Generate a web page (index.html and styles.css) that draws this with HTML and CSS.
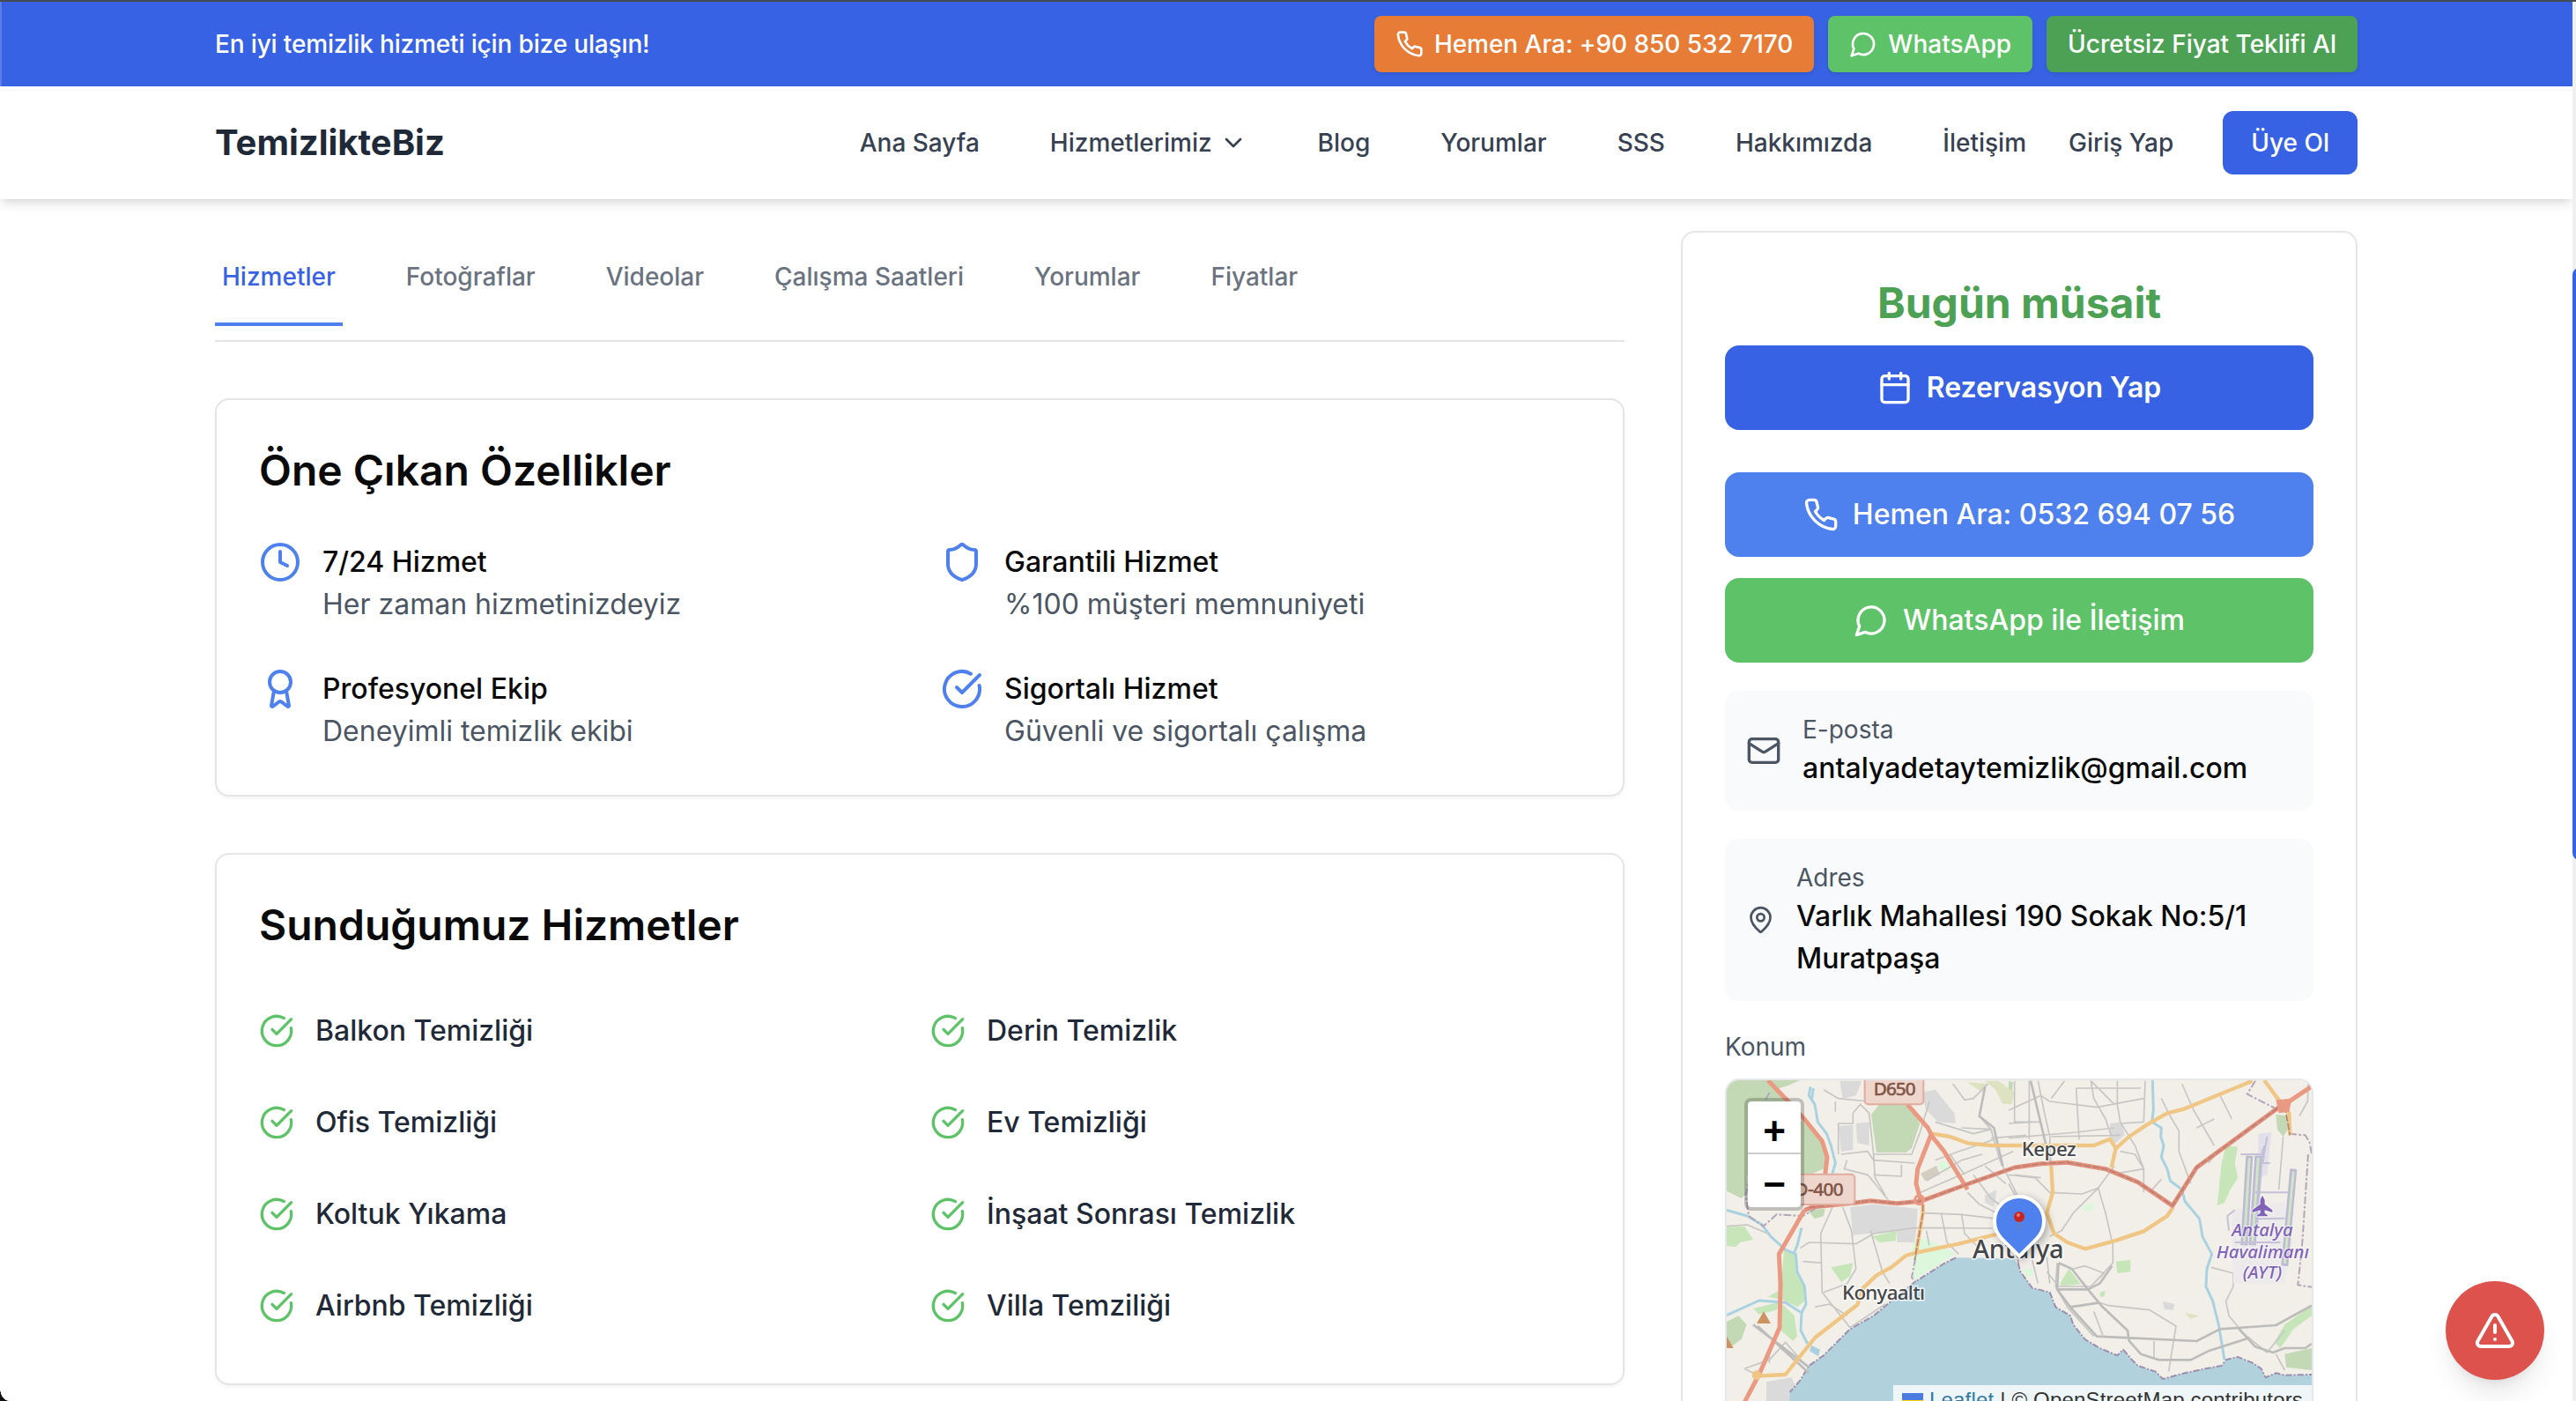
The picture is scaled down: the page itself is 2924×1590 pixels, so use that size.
FILE: index.html
```html
<!DOCTYPE html>
<html lang="tr">
<head>
    <meta charset="UTF-8">
    <meta name="viewport" content="width=device-width, initial-scale=1.0">
    <title>TemizlikteBiz</title>
    <link rel="stylesheet" href="styles.css">
</head>
<body>
    <!-- İkonlar -->
    <svg class="sprite" aria-hidden="true">
        <symbol id="phone" viewBox="0 0 24 24"><path d="M22 16.92v3a2 2 0 0 1-2.18 2 19.79 19.79 0 0 1-8.63-3.07 19.5 19.5 0 0 1-6-6 19.79 19.79 0 0 1-3.07-8.67A2 2 0 0 1 4.11 2h3a2 2 0 0 1 2 1.72 12.84 12.84 0 0 0 .7 2.81 2 2 0 0 1-.45 2.11L8.09 9.91a16 16 0 0 0 6 6l1.27-1.27a2 2 0 0 1 2.11-.45 12.84 12.84 0 0 0 2.81.7A2 2 0 0 1 22 16.92z"/></symbol>
        <symbol id="message" viewBox="0 0 24 24"><path d="M7.9 20A9 9 0 1 0 4 16.1L2 22Z"/></symbol>
        <symbol id="chevron" viewBox="0 0 24 24"><path d="m6 9 6 6 6-6"/></symbol>
        <symbol id="clock" viewBox="0 0 24 24"><circle cx="12" cy="12" r="10"/><path d="M12 6v6l4 2"/></symbol>
        <symbol id="shield" viewBox="0 0 24 24"><path d="M20 13c0 5-3.5 7.5-7.66 8.95a1 1 0 0 1-.67-.01C7.5 20.5 4 18 4 13V6a1 1 0 0 1 1-1c2 0 4.5-1.2 6.24-2.72a1.17 1.17 0 0 1 1.52 0C14.51 3.81 17 5 19 5a1 1 0 0 1 1 1z"/></symbol>
        <symbol id="award" viewBox="0 0 24 24"><path d="m15.477 12.89 1.515 8.526a.5.5 0 0 1-.81.47l-3.58-2.687a1 1 0 0 0-1.197 0l-3.586 2.686a.5.5 0 0 1-.81-.469l1.514-8.526"/><circle cx="12" cy="8" r="6"/></symbol>
        <symbol id="check" viewBox="0 0 24 24"><path d="M21.801 10A10 10 0 1 1 17 3.335"/><path d="m9 11 3 3L22 4"/></symbol>
        <symbol id="calendar" viewBox="0 0 24 24"><path d="M8 2v4M16 2v4M3 10h18"/><rect width="18" height="18" x="3" y="4" rx="2"/></symbol>
        <symbol id="mail" viewBox="0 0 24 24"><rect width="20" height="16" x="2" y="4" rx="2"/><path d="m22 7-8.97 5.7a1.94 1.94 0 0 1-2.06 0L2 7"/></symbol>
        <symbol id="pin" viewBox="0 0 24 24"><path d="M20 10c0 4.993-5.539 10.193-7.399 11.799a1 1 0 0 1-1.202 0C9.539 20.193 4 14.993 4 10a8 8 0 0 1 16 0"/><circle cx="12" cy="10" r="3"/></symbol>
        <symbol id="alert" viewBox="0 0 24 24"><path d="m21.73 18-8-14a2 2 0 0 0-3.48 0l-8 14A2 2 0 0 0 4 21h16a2 2 0 0 0 1.73-3"/><path d="M12 9v4M12 17h.01"/></symbol>
    </svg>

    <div class="topbar">
        <div class="container topbar-inner">
            <span class="topbar-text">En iyi temizlik hizmeti için bize ulaşın!</span>
            <div class="topbar-actions">
                <a class="top-btn orange"><svg class="icon"><use href="#phone"/></svg>Hemen Ara: +90 850 532 7170</a>
                <a class="top-btn green"><svg class="icon"><use href="#message"/></svg>WhatsApp</a>
                <a class="top-btn dark-green">Ücretsiz Fiyat Teklifi Al</a>
            </div>
        </div>
    </div>

    <header class="header">
        <div class="container header-inner">
            <a class="logo">TemizlikteBiz</a>
            <nav class="nav">
                <a>Ana Sayfa</a>
                <a class="has-menu">Hizmetlerimiz<svg class="icon"><use href="#chevron"/></svg></a>
                <a>Blog</a>
                <a>Yorumlar</a>
                <a>SSS</a>
                <a>Hakkımızda</a>
                <a>İletişim</a>
            </nav>
            <a class="login">Giriş Yap</a>
            <a class="signup">Üye Ol</a>
        </div>
    </header>

    <div class="container page">
        <main class="main">
            <div class="tabs">
                <a class="tab active">Hizmetler</a>
                <a class="tab">Fotoğraflar</a>
                <a class="tab">Videolar</a>
                <a class="tab">Çalışma Saatleri</a>
                <a class="tab">Yorumlar</a>
                <a class="tab">Fiyatlar</a>
            </div>

            <section class="card">
                <h2>Öne Çıkan Özellikler</h2>
                <div class="features">
                    <div class="feature">
                        <svg class="icon"><use href="#clock"/></svg>
                        <div><h3>7/24 Hizmet</h3><p>Her zaman hizmetinizdeyiz</p></div>
                    </div>
                    <div class="feature">
                        <svg class="icon"><use href="#shield"/></svg>
                        <div><h3>Garantili Hizmet</h3><p>%100 müşteri memnuniyeti</p></div>
                    </div>
                    <div class="feature">
                        <svg class="icon"><use href="#award"/></svg>
                        <div><h3>Profesyonel Ekip</h3><p>Deneyimli temizlik ekibi</p></div>
                    </div>
                    <div class="feature">
                        <svg class="icon"><use href="#check"/></svg>
                        <div><h3>Sigortalı Hizmet</h3><p>Güvenli ve sigortalı çalışma</p></div>
                    </div>
                </div>
            </section>

            <section class="card">
                <h2>Sunduğumuz Hizmetler</h2>
                <div class="services">
                    <div class="service"><svg class="icon"><use href="#check"/></svg>Balkon Temizliği</div>
                    <div class="service"><svg class="icon"><use href="#check"/></svg>Derin Temizlik</div>
                    <div class="service"><svg class="icon"><use href="#check"/></svg>Ofis Temizliği</div>
                    <div class="service"><svg class="icon"><use href="#check"/></svg>Ev Temizliği</div>
                    <div class="service"><svg class="icon"><use href="#check"/></svg>Koltuk Yıkama</div>
                    <div class="service"><svg class="icon"><use href="#check"/></svg>İnşaat Sonrası Temizlik</div>
                    <div class="service"><svg class="icon"><use href="#check"/></svg>Airbnb Temizliği</div>
                    <div class="service"><svg class="icon"><use href="#check"/></svg>Villa Temziliği</div>
                </div>
            </section>
        </main>

        <aside class="sidebar">
            <p class="available">Bugün müsait</p>
            <a class="btn btn-book"><svg class="icon"><use href="#calendar"/></svg>Rezervasyon Yap</a>
            <a class="btn btn-call"><svg class="icon"><use href="#phone"/></svg>Hemen Ara: 0532 694 07 56</a>
            <a class="btn btn-whatsapp"><svg class="icon"><use href="#message"/></svg>WhatsApp ile İletişim</a>

            <div class="info">
                <svg class="icon"><use href="#mail"/></svg>
                <div><span class="label">E-posta</span><p>antalyadetaytemizlik@gmail.com</p></div>
            </div>
            <div class="info">
                <svg class="icon icon-narrow"><use href="#pin"/></svg>
                <div><span class="label">Adres</span><p>Varlık Mahallesi 190 Sokak No:5/1 Muratpaşa</p></div>
            </div>

            <span class="label">Konum</span>
            <div class="map">
                <svg class="map-canvas" viewBox="60 48 1992 1140">
                    <rect class="land" x="60" y="48" width="1992" height="1140"/>

                    <!-- Yeşil alanlar -->
                    <g class="forest">
                        <path d="M60 48H310L270 65L225 80L300 170L380 250L405 300L400 345L330 375H130V430L110 450L60 425Z"/>
                        <path d="M580 130H680L718 195L690 280L670 294H570L552 165Z"/>
                        <path d="M60 870L100 850L128 880L110 930L75 955H60Z"/>
                        <path d="M1930 165L1970 168L1978 205L1955 240L1935 215Z"/>
                        <path d="M1960 980L2052 960V1035L1965 1025Z"/>
                        <path d="M335 490L395 485L390 510L360 520Z"/>
                        <path d="M1020 50L1035 55L1030 110L1020 130Z"/>
                    </g>
                    <g class="park">
                        <path d="M60 548L120 545L150 590L105 600L90 615L60 612Z"/>
                        <path d="M255 625L290 640L300 690L330 760L325 800L300 820L250 795L200 785L245 760Z"/>
                        <path d="M250 810L290 850L300 920L285 935L245 900Z"/>
                        <path d="M150 825L235 805L230 830L170 845Z"/>
                        <path d="M1195 740L1225 690L1265 742L1200 748Z"/>
                        <path d="M1385 665L1435 660V700L1390 705Z"/>
                        <path d="M1760 270L1800 275L1790 330L1800 380L1775 420L1755 465L1730 475L1745 330Z"/>
                        <path d="M1925 940L1960 880L2052 815V850L1990 895L1945 960Z"/>
                        <path d="M555 580L640 560L635 595L580 600Z"/>
                        <path d="M415 685L490 670L480 715L450 735Z"/>
                        <path d="M1330 770L1350 765L1345 785L1332 785Z"/>
                    </g>
                    <g class="mint">
                        <path d="M690 585L745 590L840 638L760 690L695 730Z"/>
                        <path d="M780 330L815 320L818 360L785 350Z"/>
                        <path d="M1270 475L1310 462V492L1275 492Z"/>
                        <path d="M1070 690L1105 690L1100 715L1080 718Z"/>
                    </g>
                    <g class="scrub">
                        <path d="M940 50L985 50L1040 90L1030 130L1000 128L975 80Z"/>
                        <path d="M880 55L950 60L930 90Z"/>
                        <path d="M1620 840L1670 850L1640 860Z"/>
                    </g>

                    <!-- Yerleşim -->
                    <g class="urban">
                        <path d="M480 480L560 470L710 485L705 560L700 600L640 600V560L490 575Z"/>
                        <path d="M445 50H520L500 100L455 110Z"/>
                        <path d="M440 205L490 200V285L450 290Z"/>
                        <path d="M500 195L545 190V270L505 262Z"/>
                        <path d="M720 90L770 80L835 160L840 195L780 190L740 150Z"/>
                        <path d="M1365 195L1405 190L1415 235L1380 265L1365 235Z"/>
                        <path d="M195 1075L280 1060L300 1100L270 1188H195Z"/>
                        <path d="M1545 800L1585 810L1580 830L1550 828Z"/>
                        <path d="M940 440L980 420L970 480L940 465Z"/>
                    </g>
                    <path class="beige" d="M720 365L775 338L785 370L735 390Z"/>

                    <!-- Deniz -->
                    <path class="sea" d="M840 652L800 672L700 735L620 800L560 850L480 895L430 945L390 985L340 1020L310 1070L275 1110L270 1188H2052V1050L1960 1052L1930 1045L1895 1060L1880 1030L1850 1010L1800 990L1760 1000L1745 1020L1690 1030L1620 1045L1545 1065L1520 1040L1460 1020L1440 1000L1410 965L1390 985L1330 960L1280 930L1240 880L1230 850L1180 820L1160 770L1100 755L1060 700L1040 655Z"/>
                    <path class="coast" d="M840 652L800 672L700 735L620 800L560 850L480 895L430 945L390 985L340 1020L310 1070L275 1110M1052 670L1060 700L1100 755L1160 770L1180 820L1230 850L1240 880L1280 930L1330 960L1390 985L1410 965L1440 1000L1460 1020L1520 1040L1545 1065L1620 1045L1690 1030L1745 1020L1760 1000L1800 990L1850 1010L1880 1030L1895 1060L1930 1045L1960 1052L2052 1050"/>

                    <!-- Akarsular -->
                    <g class="river">
                        <path d="M345 70L340 100L360 130L370 190L400 230L415 270L430 330L420 365M355 75L350 110"/>
                        <path d="M60 490L130 510L180 540L210 580L260 625L295 640L300 700L325 750L330 810L315 840L312 900L335 945M315 550L300 610L290 635M315 840L260 805L170 798L60 848"/>
                        <path d="M1510 48L1513 150L1508 190L1540 210L1538 240L1548 270L1540 310L1560 350L1570 390L1610 420L1620 460L1670 520L1680 580L1712 640L1695 690L1692 750L1715 800L1735 880L1755 1000"/>
                    </g>

                    <!-- Sokaklar -->
                    <g class="street">
                        <path d="M450 300L540 290L560 320L700 330M470 320L460 350L540 370L610 455M560 370L655 375V335M560 300H690L720 220L750 120M545 160L560 300L565 380L600 440M490 160L515 130L545 160M490 160V195H440V300M430 120V155M390 80L440 110L540 120"/>
                        <path d="M420 480L380 570L385 770L480 890M455 480L485 560L500 690L470 740L390 770M340 600L500 605L560 570L700 550L965 552M310 620L340 600M320 665L385 670M550 560L590 700L615 740M730 500L860 505L985 520M740 560L750 610M790 500L810 600L850 640M860 505L870 570L920 620"/>
                        <path d="M720 430L880 360L1035 290M740 390L860 320L930 300M770 320L850 290L970 250M880 430L920 470L980 500M900 370L960 450L1000 480M940 340L1010 400M820 300L870 370M830 60L870 115L900 110L950 60M930 120L920 170L960 215L990 320L1050 440M860 210L960 215M960 245L1080 235M770 190L900 230L960 215M1040 50V190H1130M1090 50V250M1250 75L1260 250M1040 370L1130 380"/>
                        <path d="M1020 150L1130 100L1160 120M1020 195L1100 190M1120 50L1140 150L1160 240L1165 350M1210 50L1165 110M1300 50L1310 110L1350 180L1370 240M1390 50V130L1400 190L1450 270L1480 350V430M1485 50L1480 190L1400 195M1250 75H1470M1020 245L1250 225L1380 210M1160 120L1320 140L1480 110M1165 240L1400 235M1020 370L1110 380L1160 430L1270 435L1325 415L1380 340M1400 290L1450 300L1480 350L1390 365M1500 430L1540 385M1300 50L1380 130"/>
                        <path d="M1540 110L1570 170L1600 220L1600 290L1640 400M1610 60L1650 150L1720 270M1740 100L1780 180M1660 210L1720 180M1325 415L1350 500L1375 610V670L1300 750H1190L1150 700M1325 415L1240 500L1200 560L1160 580M1185 670L1180 750L1220 820L1310 920M1240 690L1280 680L1345 705L1300 750M1230 820L1330 805L1360 815L1500 830L1590 885L1565 1040M1310 835L1340 915M1020 400L1060 470L1050 540M1100 660L1120 740M1150 650L1160 740"/>
                        <path d="M120 1030L205 1000L260 940L330 1020M205 960V1010M120 1030L160 1050M60 545L130 540L200 570M360 820L410 810L470 850M480 890L600 810M1710 685L1785 705V750L1760 800L1770 850L1820 910L1900 975M1740 280L1700 330M1900 975L1960 900M1930 980L1960 1035M1515 935V995M2040 60L2038 120L2010 170"/>
                        <path d="M1955 240L1940 420"/>
                    </g>
                    <g class="street-main">
                        <path d="M1095 50L1150 280L1160 330M1190 670L1235 690L1290 760L1340 820L1425 900L1430 935L1470 980L1530 1000H1640L1700 970L1840 925M1190 670L1185 760L1230 820L1320 920L1660 936L1740 895L1930 882L2052 815M1800 890L1860 955L1920 975L1960 960H2030L2052 945M1185 760H1290L1330 740L1372 680M940 70L920 170L970 210L1000 340M150 880L340 1025M165 885L340 1045M1230 820L1330 805"/>
                    </g>

                    <!-- Havalimanı -->
                    <path class="apron" d="M1780 490L1960 460L1985 600L1960 740H1785Z"/>
                    <path class="apron-light" d="M1870 230L1915 225L1900 370L1870 380Z"/>
                    <g class="runway">
                        <path d="M1840 305L1822 610M1870 305L1850 610M1990 350L1960 680"/>
                    </g>
                    <path class="runway-grass" d="M1840 312L1822 605M1870 312L1850 605M1990 358L1960 672"/>
                    <g class="taxiway">
                        <path d="M1885 280L1865 560M1810 300H1890V270M1850 430H1975M1770 560L1765 510L1790 490M1860 520L1960 518M1945 600H1790M1900 240L1885 330H1910"/>
                    </g>

                    <!-- İl sınırı -->
                    <g class="border-line">
                        <path d="M1860 50L1832 95L1900 130L1940 150M1975 230L2030 235L2045 260L2052 300M2040 300L2020 600L2005 745L2052 752M205 90L185 130L125 440L135 510L185 545L230 505L320 510L370 480M720 560L690 720L705 735M1052 670V650"/>
                    </g>

                    <!-- Ana yollar -->
                    <g class="road-yellow">
                        <path d="M760 230L820 240L880 262L960 270H1310L1365 248L1385 280L1370 345M1385 280L1430 240L1490 200L1560 160L1620 145L1850 50M1890 48L1940 115L1975 160L1978 235M1165 340L1170 430L1150 500L1175 570L1220 600L1280 622L1380 595L1480 562L1560 510L1580 480M728 470V500L705 635M980 572L850 605L705 635L670 645L620 685L570 712L525 755L505 812L360 925L260 1050L165 1055"/>
                    </g>
                    <g class="road-red">
                        <path d="M200 48L260 110L320 175L385 255L402 310L395 370M675 130L745 210L760 240L800 290L880 420M755 235L710 350L705 400L720 455M325 490L238 640L243 740L240 890L170 1050L120 1145M1960 130L2050 70"/>
                        <path class="trunk" d="M325 490L350 480L500 465L550 458L640 467L720 460L870 405L1040 345L1130 332L1220 328L1350 350L1460 395L1578 475L1610 425L1660 345L1940 140"/>
                    </g>
                    <path class="trunk-dash" d="M340 482L550 458L640 467L720 460L870 405L1040 345L1130 332L1220 328L1350 350L1460 395L1578 475L1660 345L1940 140"/>
                    <path class="trunk-dash" d="M728 470V500L700 660M1960 135L1978 235"/>
                    <circle class="junction" cx="716" cy="455" r="15"/>
                    <circle class="junction-yellow" cx="162" cy="1052" r="16"/>
                    <path class="junction-fill" d="M1930 115L1985 110L1975 155L1940 160Z"/>
                    <path class="pool" d="M348 950L378 965L372 988L342 970Z"/>
                    <path class="peak" d="M162 876L186 835L210 876ZM60 920L83 960H60Z"/>

                    <g class="shield-sign">
                        <rect x="530" y="20" width="200" height="110" rx="12"/>
                        <rect x="240" y="368" width="256" height="103" rx="12"/>
                        <text x="560" y="99" textLength="144">D650</text>
                        <text x="292" y="441" textLength="166">D-400</text>
                    </g>

                    <g class="place">
                        <text x="1064" y="305" textLength="186">Kepez</text>
                        <text x="453" y="796" textLength="282">Konyaaltı</text>
                        <text class="city" x="897" y="655" textLength="311">Antalya</text>
                    </g>
                    <g class="airport">
                        <path d="M1884 440L1892 455V470L1918 490V498L1892 490V500L1902 508V511H1866V508L1877 500V490L1850 498V490L1877 470V455Z"/>
                        <text x="1884" y="580">Antalya</text>
                        <text x="1885" y="653">Havalimanı</text>
                        <text x="1884" y="722">(AYT)</text>
                    </g>
                </svg>

                <div class="zoom">
                    <a>+</a>
                    <a>−</a>
                </div>

                <div class="marker">
                    <svg class="marker-pin" viewBox="0 0 12 22">
                        <path d="M5.2 11h1.8l-.5 10h-.8z" fill="#85807c"/>
                        <circle cx="6" cy="6" r="6" fill="#c8251c"/>
                        <circle cx="5" cy="4" r="2" fill="#f07a70"/>
                    </svg>
                </div>

                <div class="attribution">
                    <svg class="flag" viewBox="0 0 12 8"><path fill="#4c7be1" d="M0 0h12v4H0z"/><path fill="#ffd500" d="M0 4h12v3H0z"/><path fill="#e0bc00" d="M0 7h12v1H0z"/></svg>
                    <span><a>Leaflet</a> | © OpenStreetMap contributors</span>
                </div>
            </div>
        </aside>
    </div>

    <a class="alert-btn"><svg class="icon"><use href="#alert"/></svg></a>

    <div class="scrollbar"><div class="thumb"></div></div>
    <div class="corner"></div>
</body>
</html>
```
FILE: styles.css
```css
* {
    margin: 0;
    padding: 0;
    box-sizing: border-box;
}

body {
    font-family: Inter, sans-serif;
    font-size: 32px;
    line-height: 48px;
    color: #0a0a0a;
    background-color: #fff;
    height: 1590px;
    overflow: hidden;
    position: relative;
    padding-right: 4px;
    border-top: 2px solid #444a50;
}

.sprite {
    position: absolute;
    width: 0;
    height: 0;
}

.icon {
    width: 40px;
    height: 40px;
    flex: none;
    fill: none;
    stroke: currentColor;
    stroke-width: 2;
    stroke-linecap: round;
    stroke-linejoin: round;
}

.container {
    width: 2432px;
    margin: 0 auto;
}

/* Üst bar */
.topbar {
    background-color: #3762e3;
    box-shadow: inset 2px 0 0 #5a7de8;
    color: #fff;
    font-size: 28px;
    line-height: 40px;
    font-weight: 500;
}

.topbar-inner {
    height: 96px;
    display: flex;
    align-items: center;
    justify-content: space-between;
}

.topbar-text {
    letter-spacing: -0.15px;
}

.topbar-actions {
    display: flex;
    gap: 16px;
}

.top-btn {
    display: flex;
    align-items: center;
    gap: 12px;
    height: 64px;
    padding: 0 24px;
    border-radius: 8px;
    box-shadow: 0 2px 4px rgba(0, 0, 0, 0.1);
}

.top-btn .icon {
    width: 32px;
    height: 32px;
}

.orange {
    background-color: #e77c37;
    letter-spacing: -0.04px;
}

.green {
    background-color: #5ec368;
}

.dark-green {
    background-color: #4da154;
}

/* Header */
.header {
    position: relative;
    background-color: #fff;
    box-shadow: 0 8px 12px -2px rgba(0, 0, 0, 0.1), 0 4px 8px -4px rgba(0, 0, 0, 0.1);
}

.header-inner {
    height: 128px;
    display: flex;
    align-items: center;
    font-size: 28px;
    line-height: 40px;
    font-weight: 500;
    color: #374151;
}

.logo {
    font-size: 40px;
    font-weight: 700;
    color: #1f2937;
    margin-right: auto;
}

.nav {
    display: flex;
    gap: 80px;
}

.has-menu {
    display: flex;
    align-items: center;
    gap: 8px;
}

.has-menu .icon {
    width: 32px;
    height: 32px;
}

.login {
    margin: 0 56px 0 48px;
}

.signup {
    height: 72px;
    padding: 16px 32px;
    border-radius: 12px;
    background-color: #3762e3;
    color: #fff;
}

/* Sayfa */
.page {
    display: flex;
    align-items: flex-start;
    justify-content: space-between;
    padding-top: 36px;
}

.main {
    width: 1600px;
}

.tabs {
    display: flex;
    gap: 64px;
    padding-bottom: 16px;
    border-bottom: 2px solid #e5e5e5;
    font-size: 28px;
    line-height: 40px;
    font-weight: 500;
    color: #6b7280;
}

.tab {
    padding: 32px 8px;
    border-bottom: 4px solid transparent;
}

.tab.active {
    color: #3762e3;
    border-bottom-color: #4f81ee;
}

.card {
    margin-top: 64px;
    padding: 48px;
    border: 2px solid #e5e5e5;
    border-radius: 16px;
    background-color: #fff;
    box-shadow: 0 2px 4px rgba(0, 0, 0, 0.05);
}

.card h2 {
    font-size: 48px;
    line-height: 64px;
    font-weight: 600;
    margin-bottom: 48px;
}

.features {
    display: grid;
    grid-template-columns: 1fr 1fr;
    gap: 48px;
}

.feature {
    display: flex;
    gap: 24px;
}

.feature .icon {
    width: 48px;
    height: 48px;
    color: #4f81ee;
}

.feature h3 {
    font-size: 32px;
    font-weight: 500;
}

.feature p {
    color: #4b5563;
}

.services {
    display: grid;
    grid-template-columns: 1fr 1fr;
    gap: 24px;
}

.service {
    display: flex;
    align-items: center;
    gap: 24px;
    padding: 16px 0;
    font-weight: 500;
    color: #1f2937;
}

.service .icon {
    color: #5ec368;
}

/* Sağ kolon */
.sidebar {
    width: 768px;
    padding: 48px;
    border: 2px solid #e5e5e5;
    border-radius: 16px;
}

.available {
    margin-bottom: 16px;
    font-size: 48px;
    line-height: 64px;
    font-weight: 700;
    text-align: center;
    color: #4da154;
}

.btn {
    display: flex;
    align-items: center;
    justify-content: center;
    gap: 16px;
    height: 96px;
    border-radius: 16px;
    color: #fff;
    font-weight: 500;
}

.btn-book {
    background-color: #3762e3;
    font-weight: 600;
}

.btn-call {
    margin-top: 48px;
    background-color: #4f81ee;
}

.btn-whatsapp {
    margin-top: 24px;
    background-color: #5ec368;
}

.info {
    display: flex;
    align-items: center;
    gap: 24px;
    margin: 32px 0;
    padding: 24px;
    border-radius: 16px;
    background-color: #f9fafb;
    font-weight: 500;
}

.info .icon {
    color: #4b5563;
}

.info .icon-narrow {
    width: 33px;
}

.label {
    display: block;
    font-size: 28px;
    line-height: 40px;
    font-weight: 400;
    color: #4b5563;
}

/* Harita */
.map {
    position: relative;
    height: 384px;
    margin-top: 16px;
    border: 2px solid #e5e7eb;
    border-radius: 16px;
    overflow: hidden;
}

.map-canvas {
    display: block;
    width: 664px;
    height: 380px;
    fill: none;
    stroke-linejoin: round;
}

.land { fill: #f2efe9; }
.forest { fill: #c3d9b5; }
.park { fill: #c6e5b9; }
.mint { fill: #dcf7dc; }
.scrub { fill: #dde3c0; }
.urban { fill: #dadada; }
.beige { fill: #d3cfc0; }
.sea { fill: #b1d2dd; }
.pool { fill: #a9d0df; }
.peak { fill: #cc9460; }
.coast { stroke: #9d8fae; stroke-width: 6; stroke-dasharray: 22 6 6 6; }
.river { stroke: #a9d2e1; stroke-width: 9; }
.street { stroke: #c6c6c4; stroke-width: 5; }
.street-main { stroke: #bcbdbb; stroke-width: 8; }
.apron { fill: #eceaea; }
.apron-light { fill: #e2e0ea; }
.runway { stroke: #bdb9d3; stroke-width: 24; }
.runway-grass { stroke: #cfe6c4; stroke-width: 9; }
.taxiway { stroke: #c4c0d8; stroke-width: 6; }
.border-line { stroke: #b3a6bb; stroke-width: 6; stroke-dasharray: 26 7 8 7; }
.road-yellow { stroke: #efc684; stroke-width: 13; }
.road-red { stroke: #ea9a82; stroke-width: 15; }
.road-red .trunk { stroke: #e2907b; }
.trunk-dash { stroke: #bb7f72; stroke-width: 5; stroke-dasharray: 24 6; }
.junction { stroke: #ea9a82; stroke-width: 9; }
.junction-yellow { fill: #efc684; }
.junction-fill { fill: #ea9a82; }

.shield-sign {
    fill: #eed6cd;
    stroke: #e0ac9f;
    stroke-width: 6;
    font-family: "Noto Sans", sans-serif;
    font-size: 62px;
}

.shield-sign text {
    fill: #815546;
    stroke: #815546;
    stroke-width: 2;
}

.place {
    font-family: "Noto Sans", sans-serif;
    font-size: 67px;
    font-weight: 500;
    fill: #45474a;
    stroke: rgba(255, 255, 255, 0.65);
    stroke-width: 10;
    paint-order: stroke;
}

.city {
    font-size: 87px;
}

.airport {
    font-family: "Noto Sans", sans-serif;
    font-size: 61px;
    font-weight: 500;
    font-style: italic;
    text-anchor: middle;
    fill: #8163b8;
    stroke: rgba(255, 255, 255, 0.5);
    stroke-width: 8;
    paint-order: stroke;
}

.zoom {
    position: absolute;
    left: 20px;
    top: 20px;
    width: 68px;
    border: 4px solid rgba(0, 0, 0, 0.2);
    border-radius: 8px;
    background-clip: padding-box;
    background-color: #fff;
}

.zoom a {
    display: block;
    height: 60px;
    padding-top: 4px;
    text-align: center;
    font: bold 44px/60px "Liberation Sans", sans-serif;
    color: #000;
}

.zoom a:first-child {
    border-bottom: 2px solid #ccc;
}

.marker {
    position: absolute;
    left: 302px;
    top: 130px;
    width: 60px;
    height: 60px;
    border: 4px solid #fff;
    border-radius: 50% 50% 50% 0;
    background-color: #4f81ee;
    transform: rotate(-45deg);
    box-shadow: 0 4px 10px rgba(0, 0, 0, 0.3);
}

.marker-pin {
    position: absolute;
    left: 20px;
    top: 15px;
    width: 12px;
    height: 22px;
    transform: rotate(45deg);
}

.attribution {
    position: absolute;
    right: 0;
    bottom: 0;
    height: 34px;
    padding: 0 10px;
    display: flex;
    align-items: center;
    gap: 7px;
    background-color: rgba(255, 255, 255, 0.8);
    font-family: "Liberation Sans", sans-serif;
    font-size: 24px;
    line-height: 34px;
    letter-spacing: 0.17px;
    color: #333;
    white-space: nowrap;
}

.attribution a {
    color: #2f7aa7;
}

.flag {
    width: 24px;
    height: 16px;
}

/* Sabit buton */
.alert-btn {
    position: absolute;
    right: 36px;
    bottom: 24px;
    width: 112px;
    height: 112px;
    display: flex;
    align-items: center;
    justify-content: center;
    border-radius: 50%;
    background-color: #dd524c;
    color: #fff;
    box-shadow: 0 20px 30px -6px rgba(0, 0, 0, 0.1), 0 8px 12px -8px rgba(0, 0, 0, 0.1);
}

.alert-btn .icon {
    width: 48px;
    height: 48px;
}

.scrollbar {
    position: absolute;
    top: 0;
    right: 0;
    width: 4px;
    height: 1588px;
    background-color: #f0f0f0;
    overflow: hidden;
}

.thumb {
    width: 16px;
    height: 672px;
    margin-top: 302px;
    border-radius: 8px;
    background-color: #3762e3;
}

.corner {
    position: absolute;
    left: 0;
    bottom: 0;
    width: 10px;
    height: 14px;
    background: radial-gradient(ellipse at top right, transparent 97%, #111 100%);
    background: radial-gradient(ellipse 10px 14px at 100% 0, transparent 96%, #111 100%);
}
```
